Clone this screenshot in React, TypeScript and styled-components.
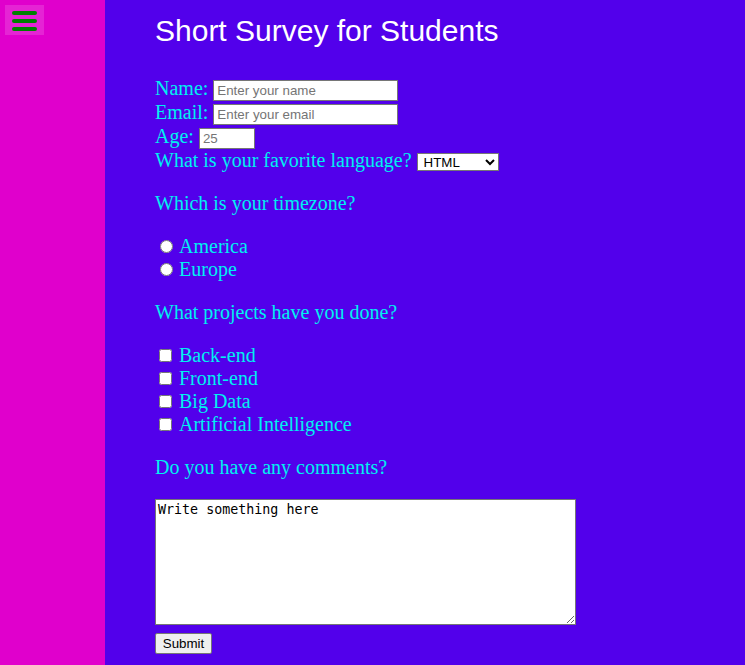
import React from "react";
import styled, { createGlobalStyle } from "styled-components";

const Global = createGlobalStyle`
  html, body { margin: 0; padding: 0; }
  body { background: #5200eb; font-family: "Liberation Serif", "Times New Roman", serif; }
`;

const Page = styled.div`
  display: flex;
  min-height: 665px;
  width: 745px;
  overflow: hidden;
`;

const Sidebar = styled.aside`
  width: 105px;
  flex-shrink: 0;
  background: #e000cc;
  padding: 5px;
  box-sizing: border-box;
`;

const MenuButton = styled.div`
  width: 39px;
  height: 30px;
  background: #e524d4;
  display: flex;
  flex-direction: column;
  justify-content: center;
  align-items: center;
  gap: 4px;
  padding-top: 2px;
  box-sizing: border-box;
`;

const Bar = styled.span`
  display: block;
  width: 25px;
  height: 4px;
  border-radius: 2px;
  background: #008000;
`;

const Main = styled.main`
  flex: 1;
  padding: 13px 0 0 50px;
  color: #00f0f0;
`;

const Title = styled.h1`
  margin: 0 0 28px;
  font-family: "Liberation Sans", Arial, sans-serif;
  font-weight: 400;
  font-size: 30px;
  line-height: 36px;
  color: #ffffff;
`;

const Form = styled.form`
  display: flex;
  flex-direction: column;
  font-size: 20px;
  line-height: 23px;
`;

const Row = styled.label<{ h?: number }>`
  display: flex;
  align-items: flex-start;
  gap: 5px;
  height: ${(p) => p.h ?? 24}px;
`;

const TextInput = styled.input<{ w: number }>`
  width: ${(p) => p.w}px;
  height: 21px;
  margin-top: 3px;
  box-sizing: border-box;
  border: 1px solid #767676;
  padding: 1px 3px;
  font-family: "Liberation Sans", Arial, sans-serif;
  font-size: 13.33px;
  color: #000;
  &::placeholder { color: #757575; }
`;

const Select = styled.select`
  width: 82px;
  height: 18px;
  margin-top: 4px;
  font-family: "Liberation Sans", Arial, sans-serif;
  font-size: 13.33px;
  border: 1px solid #767676;
  background: #fff;
  color: #000;
  padding: 0 0 0 2px;
`;

const Question = styled.p`
  margin: 20px 0;
  line-height: 23px;
`;

const Choice = styled.label<{ pad: number; gap: number }>`
  display: flex;
  align-items: center;
  height: 23px;
  padding-left: ${(p) => p.pad}px;
  gap: ${(p) => p.gap}px;
  input { margin: 0; width: 13px; height: 13px; }
`;

const Comment = styled.textarea`
  width: 421px;
  height: 126px;
  box-sizing: border-box;
  border: 1px solid #767676;
  padding: 2px;
  font-family: "DejaVu Sans Mono", "Liberation Mono", monospace;
  font-size: 13.33px;
  color: #000;
  resize: both;
`;

const Submit = styled.button`
  align-self: flex-start;
  margin-top: 8px;
  width: 57px;
  height: 21px;
  padding: 1px 6px;
  font-family: "Liberation Sans", Arial, sans-serif;
  font-size: 13.33px;
  color: #000;
  background: #efefef;
  border: 1px solid #767676;
  border-radius: 2px;
`;

export default function App() {
  return (
    <Page>
      <Global />
      <Sidebar>
        <MenuButton>
          <Bar />
          <Bar />
          <Bar />
        </MenuButton>
      </Sidebar>
      <Main>
        <Title>Short Survey for Students</Title>
        <Form onSubmit={(e) => e.preventDefault()}>
          <Row>
            Name: <TextInput w={185} type="text" placeholder="Enter your name" />
          </Row>
          <Row>
            Email: <TextInput w={185} type="email" placeholder="Enter your email" />
          </Row>
          <Row>
            Age: <TextInput w={56} type="number" placeholder="25" />
          </Row>
          <Row h={23}>
            What is your favorite language?{" "}
            <Select defaultValue="HTML">
              <option>HTML</option>
              <option>CSS</option>
              <option>JavaScript</option>
            </Select>
          </Row>
          <Question>Which is your timezone?</Question>
          <Choice pad={5} gap={6}>
            <input type="radio" name="tz" /> America
          </Choice>
          <Choice pad={5} gap={6}>
            <input type="radio" name="tz" /> Europe
          </Choice>
          <Question>What projects have you done?</Question>
          <Choice pad={4} gap={7}>
            <input type="checkbox" /> Back-end
          </Choice>
          <Choice pad={4} gap={7}>
            <input type="checkbox" /> Front-end
          </Choice>
          <Choice pad={4} gap={7}>
            <input type="checkbox" /> Big Data
          </Choice>
          <Choice pad={4} gap={7}>
            <input type="checkbox" /> Artificial Intelligence
          </Choice>
          <Question>Do you have any comments?</Question>
          <Comment defaultValue="Write something here" />
          <Submit type="submit">Submit</Submit>
        </Form>
      </Main>
    </Page>
  );
}
